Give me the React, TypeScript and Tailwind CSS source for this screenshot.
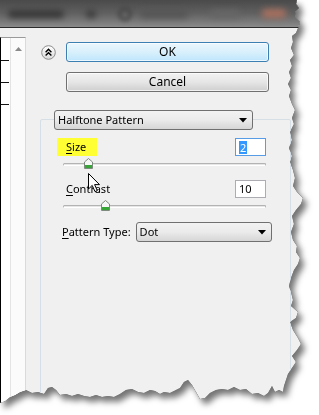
import React from 'react';

const Thumb: React.FC = () => (
  <svg width="9" height="11" viewBox="0 0 9 11">
    <path d="M0.5 4 L4.5 0.5 L8.5 4 V10.5 H0.5 Z" fill="#f7f7f7" stroke="#7d8a7d" />
    <rect x="1" y="7" width="7" height="3" fill="#37a537" />
  </svg>
);

const Slider: React.FC<{ pos: number }> = ({ pos }) => (
  <div className="relative ml-[22px] mt-[1px] w-[203px] h-[14px] flex items-center">
    <div className="w-full h-[3px] rounded-full border border-[#b3b3b3] border-b-white bg-[#e6e6e6]" />
    <div className="absolute top-[1px] flex" style={{ left: pos }}>
      <Thumb />
    </div>
  </div>
);

const Arrow: React.FC = () => (
  <svg width="8" height="5" viewBox="0 0 8 5">
    <path d="M0 0 H8 L4 4.5 Z" fill="#000" />
  </svg>
);

const Underlined: React.FC<{ first: string; rest: string }> = ({ first, rest }) => (
  <span>
    <span className="underline underline-offset-2">{first}</span>
    {rest}
  </span>
);

export default function App() {
  return (
    <div className="w-[319px] h-[415px] bg-white overflow-hidden relative font-['Noto_Sans',sans-serif] text-[11px] text-black">
      <div className="w-[305px] h-[405px] [filter:drop-shadow(0_0_0.6px_#000)_drop-shadow(4px_5px_3px_rgba(0,0,0,0.55))]">
        <div className="w-[305px] h-[405px] bg-[#f0f0f0] flex flex-col [clip-path:polygon(0_0,297px_0,296px_4px,299px_8px,295px_12px,296px_18px,300px_22px,298px_28px,296px_33px,292px_36px,293px_42px,291px_48px,294px_55px,290px_60px,292px_66px,289px_72px,291px_78px,288px_84px,291px_90px,289px_96px,292px_104px,295px_110px,292px_118px,294px_124px,290px_132px,292px_140px,289px_148px,292px_156px,290px_162px,293px_170px,295px_178px,293px_186px,297px_192px,303px_198px,301px_204px,296px_210px,292px_216px,294px_224px,291px_232px,293px_240px,297px_246px,296px_252px,300px_258px,298px_264px,294px_270px,291px_278px,289px_286px,291px_292px,293px_300px,291px_306px,298px_312px,296px_318px,290px_322px,293px_330px,298px_338px,301px_344px,297px_350px,292px_356px,296px_362px,292px_368px,288px_374px,286px_380px,284px_386px,283px_392px,279px_390px,275px_392px,272px_386px,268px_393px,264px_396px,258px_393px,252px_394px,246px_389px,240px_390px,234px_387px,228px_390px,222px_389px,216px_390px,210px_393px,205px_398px,200px_399px,196px_392px,192px_385px,188px_380px,184px_382px,180px_388px,176px_390px,170px_393px,164px_392px,160px_394px,155px_391px,150px_390px,144px_393px,138px_392px,132px_389px,126px_390px,120px_394px,114px_397px,108px_396px,102px_397px,96px_395px,90px_397px,84px_396px,78px_394px,72px_396px,66px_394px,60px_395px,56px_390px,52px_387px,48px_388px,44px_394px,38px_392px,32px_393px,26px_390px,20px_392px,15px_395px,10px_397px,5px_401px,0_403px)]">
          {/* blurred title bar */}
          <div className="h-[28px] shrink-0 bg-gradient-to-b from-[#4a4a4a] via-[#616161] to-[#8a8a8a] border-b border-[#2c2c2c] flex items-center pl-[8px] gap-[22px] overflow-hidden">
            <div className="w-[56px] h-[8px] bg-[#363636] blur-[3px] rounded" />
            <div className="w-[10px] h-[8px] bg-[#3a3a3a] blur-[3px] rounded" />
            <div className="w-[14px] h-[14px] rounded-full border-[3px] border-[#444444] blur-[2px]" />
            <div className="-ml-[14px] w-[48px] h-[8px] bg-[#555555] blur-[3px] rounded" />
            <div className="w-[30px] h-[8px] bg-[#666666] blur-[3px] rounded" />
            <div className="w-[24px] h-[9px] bg-[#a8705f] blur-[3px] rounded" />
          </div>

          <div className="flex flex-1">
            {/* left list + scrollbar */}
            <div className="w-[26px] mt-[9px] bg-white border-t border-t-[#9a9a9a] border-l border-l-black border-r border-r-[#d4dbe2] flex">
              <div className="w-[9px] flex flex-col">
                <div className="h-[23px] border-b border-[#111] w-[8px]" />
                <div className="h-[22px] border-b border-[#111] w-[8px]" />
                <div className="h-[22px] border-b border-[#111] w-[8px]" />
              </div>
              <div className="flex-1 border-l border-[#e4e4e4] bg-[#fbfbfb] flex justify-center">
                <svg width="7" height="4" viewBox="0 0 7 4" className="mt-[9px]">
                  <path d="M0 4 L3.5 0 L7 4 Z" fill="#8a8a8a" />
                </svg>
              </div>
            </div>

            {/* dialog controls */}
            <div className="flex-1 flex flex-col pl-[14px] pt-[14px]">
              <div className="flex items-center h-[20px]">
                <svg width="15" height="15" viewBox="0 0 15 15" className="ml-[1px]">
                  <defs>
                    <linearGradient id="cb" x1="0" y1="0" x2="0" y2="1">
                      <stop offset="0" stopColor="#ffffff" />
                      <stop offset="1" stopColor="#d9d9d9" />
                    </linearGradient>
                  </defs>
                  <circle cx="7.5" cy="7.5" r="6.8" fill="url(#cb)" stroke="#8c8c8c" />
                  <path d="M4.6 7.2 L7.5 4.3 L10.4 7.2 M4.6 10.6 L7.5 7.7 L10.4 10.6" stroke="#000" strokeWidth="1.4" fill="none" />
                </svg>
                <div className="ml-[10px] w-[203px] h-[20px] rounded-[3px] border border-[#3c7fb1] bg-gradient-to-b from-[#eaf6fd] via-[#d9f0fc] to-[#bee6fd] shadow-[inset_0_0_0_1px_rgba(255,255,255,0.7)] flex items-center justify-center text-[12px]">
                  OK
                </div>
              </div>

              <div className="ml-[26px] mt-[10px] w-[203px] h-[20px] rounded-[3px] border border-[#707070] bg-gradient-to-b from-[#f2f2f2] via-[#e6e6e6] to-[#cfcfcf] shadow-[inset_0_0_0_1px_rgba(255,255,255,0.7)] flex items-center justify-center text-[12px]">
                Cancel
              </div>

              <div className="mt-[27px] w-[251px] flex-1 border border-[#d5dfe5] rounded-[2px] flex flex-col">
                <div className="-mt-[10px] ml-[13px] w-[199px] h-[20px] rounded-[3px] border border-[#707070] bg-gradient-to-b from-[#f2f2f2] via-[#ebebeb] to-[#d6d6d6] flex items-center justify-between pl-[3px] pr-[5px]">
                  <span>Halftone Pattern</span>
                  <Arrow />
                </div>

                <div className="mt-[8px] h-[18px] flex items-center ml-[16px] w-[209px] justify-between">
                  <div className="bg-[#ffff33] h-[18px] w-[40px] pl-[9px] flex items-center">
                    <Underlined first="S" rest="ize" />
                  </div>
                  <div className="w-[31px] h-[18px] bg-white border border-[#569de5] flex items-center pl-[3px]">
                    <span className="bg-[#3399ff] text-white px-[1px] leading-[13px]">2</span>
                  </div>
                </div>
                <Slider pos={21} />

                <div className="mt-[9px] h-[18px] flex items-center ml-[25px] w-[200px] justify-between">
                  <Underlined first="C" rest="ontrast" />
                  <div className="w-[31px] h-[18px] bg-white border border-[#abadb3] flex items-center pl-[3px]">
                    10
                  </div>
                </div>
                <Slider pos={38} />

                <div className="mt-[9px] h-[20px] flex items-center ml-[21px]">
                  <Underlined first="P" rest="attern Type:" />
                  <div className="ml-[5px] w-[136px] h-[20px] rounded-[3px] border border-[#707070] bg-gradient-to-b from-[#f2f2f2] via-[#ebebeb] to-[#d6d6d6] flex items-center justify-between pl-[3px] pr-[5px]">
                    <span>Dot</span>
                    <Arrow />
                  </div>
                </div>
              </div>
            </div>
          </div>
        </div>
      </div>

      {/* mouse pointer */}
      <svg width="13" height="20" viewBox="0 0 13 20" className="absolute left-[88px] top-[173px]">
        <path d="M0.5 0.5 V16 L4.2 12.4 L7 18.6 L9.3 17.6 L6.6 11.6 H11.5 Z" fill="#fff" stroke="#000" strokeWidth="1" strokeLinejoin="round" />
      </svg>
    </div>
  );
}
